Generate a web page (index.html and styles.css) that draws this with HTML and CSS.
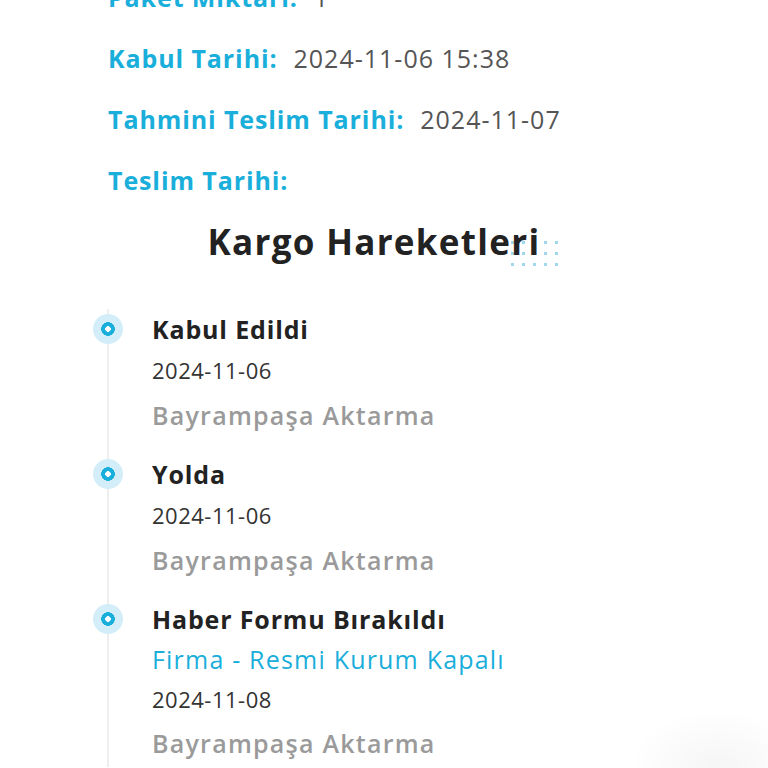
FILE: index.html
```html
<!DOCTYPE html>
<html lang="tr">
<head>
<meta charset="utf-8">
<title>Kargo Takip</title>
<link rel="stylesheet" href="styles.css">
</head>
<body>
<main class="page">
  <section class="info">
    <div class="row"><span class="label">Paket Miktarı:</span><span class="value">1</span></div>
    <div class="row"><span class="label">Kabul Tarihi:</span><span class="value">2024-11-06 15:38</span></div>
    <div class="row"><span class="label">Tahmini Teslim Tarihi:</span><span class="value">2024-11-07</span></div>
    <div class="row"><span class="label">Teslim Tarihi:</span><span class="value"></span></div>
  </section>

  <h2 class="heading"><span class="heading-text"><span class="dots"></span><span class="heading-label">Kargo Hareketleri</span></span></h2>

  <ol class="timeline">
    <li class="item">
      <div class="title">Kabul Edildi</div>
      <div class="date">2024-11-06</div>
      <div class="place">Bayrampaşa Aktarma</div>
    </li>
    <li class="item">
      <div class="title">Yolda</div>
      <div class="date">2024-11-06</div>
      <div class="place">Bayrampaşa Aktarma</div>
    </li>
    <li class="item">
      <div class="title">Haber Formu Bırakıldı</div>
      <div class="note">Firma - Resmi Kurum Kapalı</div>
      <div class="date short">2024-11-08</div>
      <div class="place">Bayrampaşa Aktarma</div>
    </li>
  </ol>
  <div class="fab-shadow"></div>
</main>
</body>
</html>
```

FILE: styles.css
```css
html, body {
  margin: 0;
  padding: 0;
  background: #ffffff;
  overflow: hidden;
}

body {
  font-family: "Open Sans", "Noto Sans", sans-serif;
  color: #222222;
}

.page {
  position: relative;
  height: 768px;
  overflow: hidden;
}

.info {
  margin-top: -34px;
  padding-left: 108px;
}

.row {
  height: 61px;
  display: flex;
  align-items: center;
  gap: 16px;
  font-size: 25px;
}

.label {
  color: #1aaedb;
  font-weight: 700;
  letter-spacing: 0.9px;
}

.value {
  color: #555555;
  font-weight: 400;
  letter-spacing: 1px;
}

.heading {
  margin: 7px 0 0 0;
  padding-right: 20px;
  height: 50px;
  line-height: 50px;
  text-align: center;
  font-size: 35px;
  font-weight: 700;
  color: #222222;
  letter-spacing: 1.3px;
}

.heading-text {
  position: relative;
  display: inline-block;
}

.heading-label {
  position: relative;
}

.heading-text .dots {
  position: absolute;
  right: -22px;
  top: 20px;
  width: 55px;
  height: 33px;
  background-image: radial-gradient(circle, #9fd8ee 0 1.4px, rgba(255,255,255,0) 1.8px);
  background-size: 11px 11px;
}

.timeline {
  list-style: none;
  margin: 42px 0 0 107px;
  padding: 0 0 0 43px;
  border-left: 2px solid #eeeeee;
}

.item {
  position: relative;
  margin-bottom: 15px;
}

.item::before {
  content: "";
  position: absolute;
  left: -60px;
  top: 4px;
  width: 32px;
  height: 32px;
  border-radius: 50%;
  background: radial-gradient(circle, #ffffff 0 2.6px, #1aaedb 3px 6.6px, #d3eef8 7px 14.5px, rgba(211,238,248,0) 15.5px);
}

.title {
  height: 40px;
  line-height: 40px;
  font-size: 25px;
  font-weight: 700;
  color: #222222;
  letter-spacing: 0.85px;
}

.date {
  height: 42px;
  line-height: 42px;
  font-size: 22px;
  font-weight: 400;
  color: #333333;
  letter-spacing: 0.5px;
}

.date.short {
  height: 40px;
  line-height: 40px;
}

.note {
  height: 40px;
  line-height: 40px;
  font-size: 25px;
  font-weight: 400;
  color: #1aaedb;
  letter-spacing: 1.2px;
}

.place {
  height: 48px;
  line-height: 48px;
  font-size: 25px;
  font-weight: 600;
  color: #9a9a9a;
  letter-spacing: 1.25px;
}

.fab-shadow {
  position: absolute;
  right: -40px;
  bottom: -60px;
  width: 180px;
  height: 120px;
  border-radius: 50%;
  background: radial-gradient(ellipse, rgba(0,0,0,0.04), rgba(0,0,0,0) 70%);
}
```
